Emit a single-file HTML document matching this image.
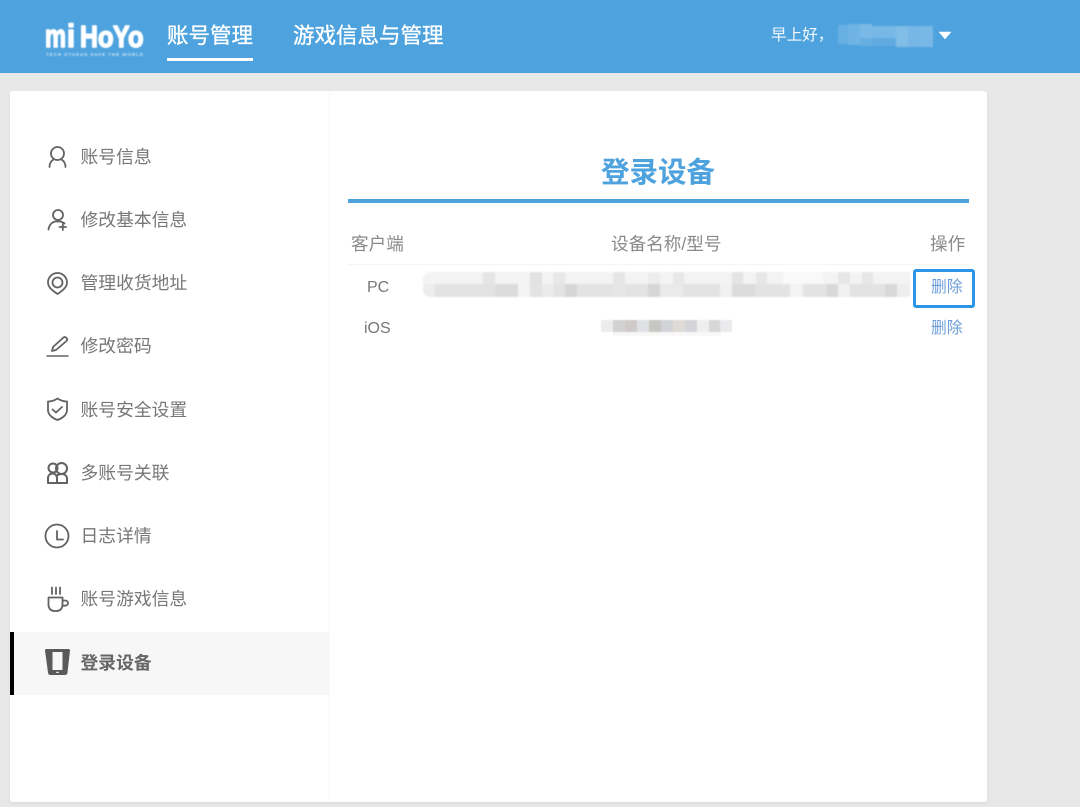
<!DOCTYPE html>
<html lang="zh-CN">
<head>
<meta charset="utf-8">
<title>登录设备</title>
<style>
html,body{margin:0;padding:0}
body{width:1080px;height:807px;overflow:hidden;background:#e8e8e8;position:relative;font-family:"Liberation Sans","Noto Sans CJK SC",sans-serif}
.a{position:absolute;white-space:nowrap}
.hd{left:0;top:0;width:1080px;height:73px;background:#4ea3de}
.nav{color:#fff;font-size:21.5px;line-height:30px;top:21px;-webkit-text-stroke:.35px #fff;filter:blur(.35px)}
.card{left:10px;top:91px;width:977px;height:711px;background:#fff;border-radius:3px;box-shadow:0 2px 3px #dcdcdc}
.div{left:329px;top:91px;width:1px;height:711px;background:#f8f8f8}
.m{left:80.500px;font-size:17.8px;line-height:26px;color:#777;filter:blur(.3px)}
.ic{position:absolute;left:42px;width:30px;height:30px;fill:none;stroke:#626262;stroke-width:1.8;stroke-linecap:round;stroke-linejoin:round;filter:blur(.25px)}
.th{font-size:17.6px;line-height:26px;top:231px;color:#8a8a8a;filter:blur(.3px)}
.td{font-size:16px;line-height:22px;color:#777;filter:blur(.25px)}
.del{font-size:15.8px;line-height:22px;left:931px;color:#6d9fd9;filter:blur(.25px)}
.lg{font-family:"Liberation Sans",sans-serif;font-weight:700;fill:#fff;stroke:#fff;stroke-width:1.6;stroke-linejoin:round}
</style>
</head>
<body>
<div class="a hd"></div>

<svg class="a" style="left:40px;top:20px;filter:blur(.4px)" width="108" height="42" viewBox="0 0 108 42">
<text class="lg" font-size="32" transform="translate(5 27) scale(.74 1)">m</text>
<text class="lg" font-size="32" transform="translate(27 27) scale(.9 1)">i</text>
<text class="lg" font-size="31" transform="translate(40 27) scale(.8 1)">H</text>
<text class="lg" font-size="30" transform="translate(58 27) scale(.85 1)">o</text>
<text class="lg" font-size="31" transform="translate(73 27) scale(.8 1)">Y</text>
<text class="lg" font-size="30" transform="translate(88 27) scale(.85 1)">o</text>
<text x="6" y="36" font-family="'Liberation Sans',sans-serif" font-weight="700" font-size="4.6" fill="#fff" fill-opacity=".7" textLength="97" lengthAdjust="spacing">TECH OTAKUS SAVE THE WORLD</text>
</svg>

<div class="a nav" style="left:167px">账号管理</div>
<div class="a" style="left:167px;top:58px;width:86px;height:3px;background:#fff"></div>
<div class="a nav" style="left:293px">游戏信息与管理</div>

<div class="a" style="left:771px;top:25px;color:#f4f9fd;font-size:15.6px;line-height:22px;filter:blur(.25px)">早上好，</div>
<svg class="a" style="left:838px;top:23px;filter:blur(.8px)" width="96" height="25" viewBox="0 0 96 25">
<rect x="0" y="2" width="10" height="19" fill="#67afe2"/>
<rect x="10" y="1" width="12" height="21" fill="#6fb4e4"/>
<rect x="22" y="1" width="12" height="14" fill="#7ab9e6"/>
<rect x="22" y="15" width="12" height="8" fill="#66aee1"/>
<rect x="34" y="3" width="24" height="12" fill="#78b8e6"/>
<rect x="34" y="15" width="24" height="8" fill="#60aae0"/>
<rect x="58" y="3" width="12" height="21" fill="#80bde7"/>
<rect x="70" y="3" width="12" height="21" fill="#77b7e6"/>
<rect x="82" y="3" width="13" height="21" fill="#79b8e6"/>
</svg>
<svg class="a" style="left:938px;top:30px" width="14" height="10" viewBox="0 0 14 10"><path d="M1 2H13L7 9Z" fill="#fff" stroke="#fff" stroke-width=".5" stroke-linejoin="round"/></svg>

<div class="a card"></div>
<div class="a div"></div>
<div class="a" style="left:10px;top:632px;width:319px;height:63px;background:#f7f7f7"></div>
<div class="a" style="left:10px;top:632px;width:4px;height:63px;background:#000"></div>

<!-- user -->
<svg class="ic" style="top:142px" viewBox="0 0 30 30"><circle cx="15.500" cy="11.500" r="6.500"/><path d="M7.500 25C7.500 21.500 9 19 11.500 17.500M23.500 25C23.500 21.500 22 19 19.500 17.500"/></svg>
<div class="a m" style="top:144px">账号信息</div>
<!-- user plus -->
<svg class="ic" style="top:205px" viewBox="0 0 30 30"><circle cx="16" cy="10" r="5"/><path d="M6.500 24.500C7 20.500 9.500 17.500 13 16.500H18.500C20 17 21.500 17.500 22.500 18.500M17.500 22H24M20.800 19V25"/></svg>
<div class="a m" style="top:207px">修改基本信息</div>
<!-- location -->
<svg class="ic" style="top:269px" viewBox="0 0 30 30"><path d="M15.500 25C11 22 6 18.500 6 13.500C6 8 10.500 4 15.500 4C20.500 4 25 8 25 13.500C25 18.500 20 22 15.500 25Z"/><circle cx="15.500" cy="13.500" r="5"/></svg>
<div class="a m" style="top:270px">管理收货地址</div>
<!-- pencil -->
<svg class="ic" style="top:332px" viewBox="0 0 30 30"><path d="M10 19L11 15L21.500 5.500Q23 4.500 24.500 6Q26 7.500 24.500 9L14 18Z"/><path d="M5 24H26" stroke-width="1.400"/></svg>
<div class="a m" style="top:333px">修改密码</div>
<!-- shield -->
<svg class="ic" style="top:395px" viewBox="0 0 30 30"><path d="M15.500 3.500Q20 6.500 25 6.500V15C25 20 20 23.500 15.500 25C11 23.500 6 20 6 15V6.500Q11 6.500 15.500 3.500Z"/><path d="M10.500 14.500L14 17.500L20 12"/></svg>
<div class="a m" style="top:397px">账号安全设置</div>
<!-- group -->
<svg class="ic" style="top:458px;stroke-width:2" viewBox="0 0 30 30"><circle cx="11" cy="10" r="4.500"/><circle cx="19.500" cy="10.500" r="5.500"/><path d="M6 25H15V20C15 17.500 13 15.500 10.500 15.500C8 15.500 6 17.500 6 20ZM15 25H25V20.500C25 18 23 16 20 16C18 16 16 16.500 14.500 18"/></svg>
<div class="a m" style="top:460px">多账号关联</div>
<!-- clock -->
<svg class="ic" style="top:521px" viewBox="0 0 30 30"><circle cx="15" cy="15" r="11.500"/><path d="M15 10V18.500H21"/></svg>
<div class="a m" style="top:523px">日志详情</div>
<!-- cup -->
<svg class="ic" style="top:584px" viewBox="0 0 30 30"><path d="M10 3.500V10M14 3.500V10M18 3.500V10"/><path d="M6.500 13.500H20.500V21C20.500 24.500 18 27 14.500 27H12.500C9 27 6.500 24.500 6.500 21ZM20.500 16.500H23C25 16.500 26 17.700 26 19C26 20.500 25 21.700 23 21.700H20.500"/></svg>
<div class="a m" style="top:586px">账号游戏信息</div>
<!-- active device -->
<svg class="a" style="left:42px;top:647px;filter:blur(.3px)" width="30" height="30" viewBox="0 0 30 30"><path fill-rule="evenodd" fill="#5a5a5a" d="M3 3.500Q3 2 4.500 2H26.500Q28 2 28 3.500L25.500 25.500Q25.300 28 23 28H8.500Q6.200 28 6 25.500ZM10.500 5V23H20.500V5Z"/><rect x="14" y="24.800" width="3" height="1.200" fill="#ddd"/></svg>
<div class="a m" style="top:650px;font-weight:700;color:#666">登录设备</div>

<div class="a" style="left:601px;top:153px;font-size:28.500px;line-height:40px;font-weight:700;color:#4ea3de;filter:blur(.3px)">登录设备</div>
<div class="a" style="left:348px;top:199px;width:621px;height:3.500px;background:#4ea3de"></div>

<div class="a th" style="left:351px">客户端</div>
<div class="a th" style="left:611px">设备名称/型号</div>
<div class="a th" style="left:930px">操作</div>
<div class="a" style="left:348px;top:264px;width:621px;height:1px;background:#f5f5f5"></div>

<div class="a td" style="left:367px;top:277px">PC</div>
<svg class="a" style="left:423px;top:272px;filter:blur(.9px)" width="487" height="25" viewBox="0 0 487 25">
<path d="M8 0H487V12H0V8Q0 0 8 0Z" fill="#f3f3f3"/>
<path d="M0 12H487V25H8Q0 25 0 17Z" fill="#e3e3e3"/>
<path d="M0 12H12V25H8Q0 25 0 17Z" fill="#ededed"/>
<rect x="60" y="0" width="12" height="12" fill="#e5e5e5"/><rect x="107" y="0" width="12" height="12" fill="#e2e2e2"/>
<rect x="130" y="0" width="12" height="12" fill="#e8e8ea"/>
<rect x="190" y="0" width="12" height="12" fill="#e5e5e5"/><rect x="225" y="0" width="12" height="12" fill="#ededed"/>
<rect x="250" y="0" width="11" height="12" fill="#e8e8e8"/><rect x="309" y="0" width="11" height="12" fill="#e4e4e4"/>
<rect x="333" y="0" width="11" height="12" fill="#e6e6e6"/><rect x="415" y="0" width="12" height="12" fill="#e7e7e7"/>
<rect x="439" y="0" width="11" height="12" fill="#e7e7e7"/><rect x="360" y="0" width="40" height="12" fill="#f9f9f9"/>
<rect x="72" y="12" width="23" height="13" fill="#dcdcdc"/><rect x="95" y="12" width="12" height="13" fill="#f3f3f3"/>
<rect x="119" y="12" width="12" height="13" fill="#ebebeb"/><rect x="142" y="12" width="12" height="13" fill="#d6d6d6"/>
<rect x="190" y="12" width="12" height="13" fill="#e6e6e6"/><rect x="225" y="12" width="12" height="13" fill="#d6d6d6"/>
<rect x="237" y="12" width="23" height="13" fill="#eaeaea"/><rect x="297" y="12" width="12" height="13" fill="#f1f1f1"/>
<rect x="309" y="12" width="23" height="13" fill="#dcdcdc"/><rect x="367" y="12" width="13" height="13" fill="#f3f3f3"/>
<rect x="404" y="12" width="11" height="13" fill="#d8d8d8"/><rect x="415" y="12" width="12" height="13" fill="#f1f1f1"/>
<rect x="462" y="12" width="12" height="13" fill="#d8d8d8"/><rect x="474" y="12" width="13" height="13" fill="#eeeeee"/>
</svg>
<div class="a" style="left:913px;top:269px;width:56px;height:33px;border:3px solid #2b95e8;border-radius:3px"></div>
<div class="a del" style="top:277px">删除</div>

<div class="a td" style="left:364px;top:318px">iOS</div>
<svg class="a" style="left:601px;top:320px;filter:blur(.6px)" width="131" height="17" viewBox="0 0 131 17" shape-rendering="crispEdges">
<rect x="0" y="0" width="12" height="12" fill="#ececec"/><rect x="12" y="0" width="12" height="12" fill="#d2d2d3"/>
<rect x="24" y="0" width="12" height="12" fill="#cfcaca"/><rect x="36" y="0" width="12" height="12" fill="#e0e1e5"/>
<rect x="48" y="0" width="12" height="12" fill="#c8c6c2"/><rect x="60" y="0" width="12" height="12" fill="#d2d3d6"/>
<rect x="72" y="0" width="12" height="12" fill="#dedbd6"/><rect x="84" y="0" width="12" height="12" fill="#d4d4d8"/>
<rect x="96" y="0" width="12" height="12" fill="#efefef"/><rect x="108" y="0" width="11" height="12" fill="#d7d7d7"/>
<rect x="119" y="0" width="12" height="12" fill="#ebebed"/>
<rect x="12" y="12" width="108" height="4" fill="#f8f8f8"/>
</svg>
<div class="a del" style="top:318px">删除</div>
</body>
</html>
